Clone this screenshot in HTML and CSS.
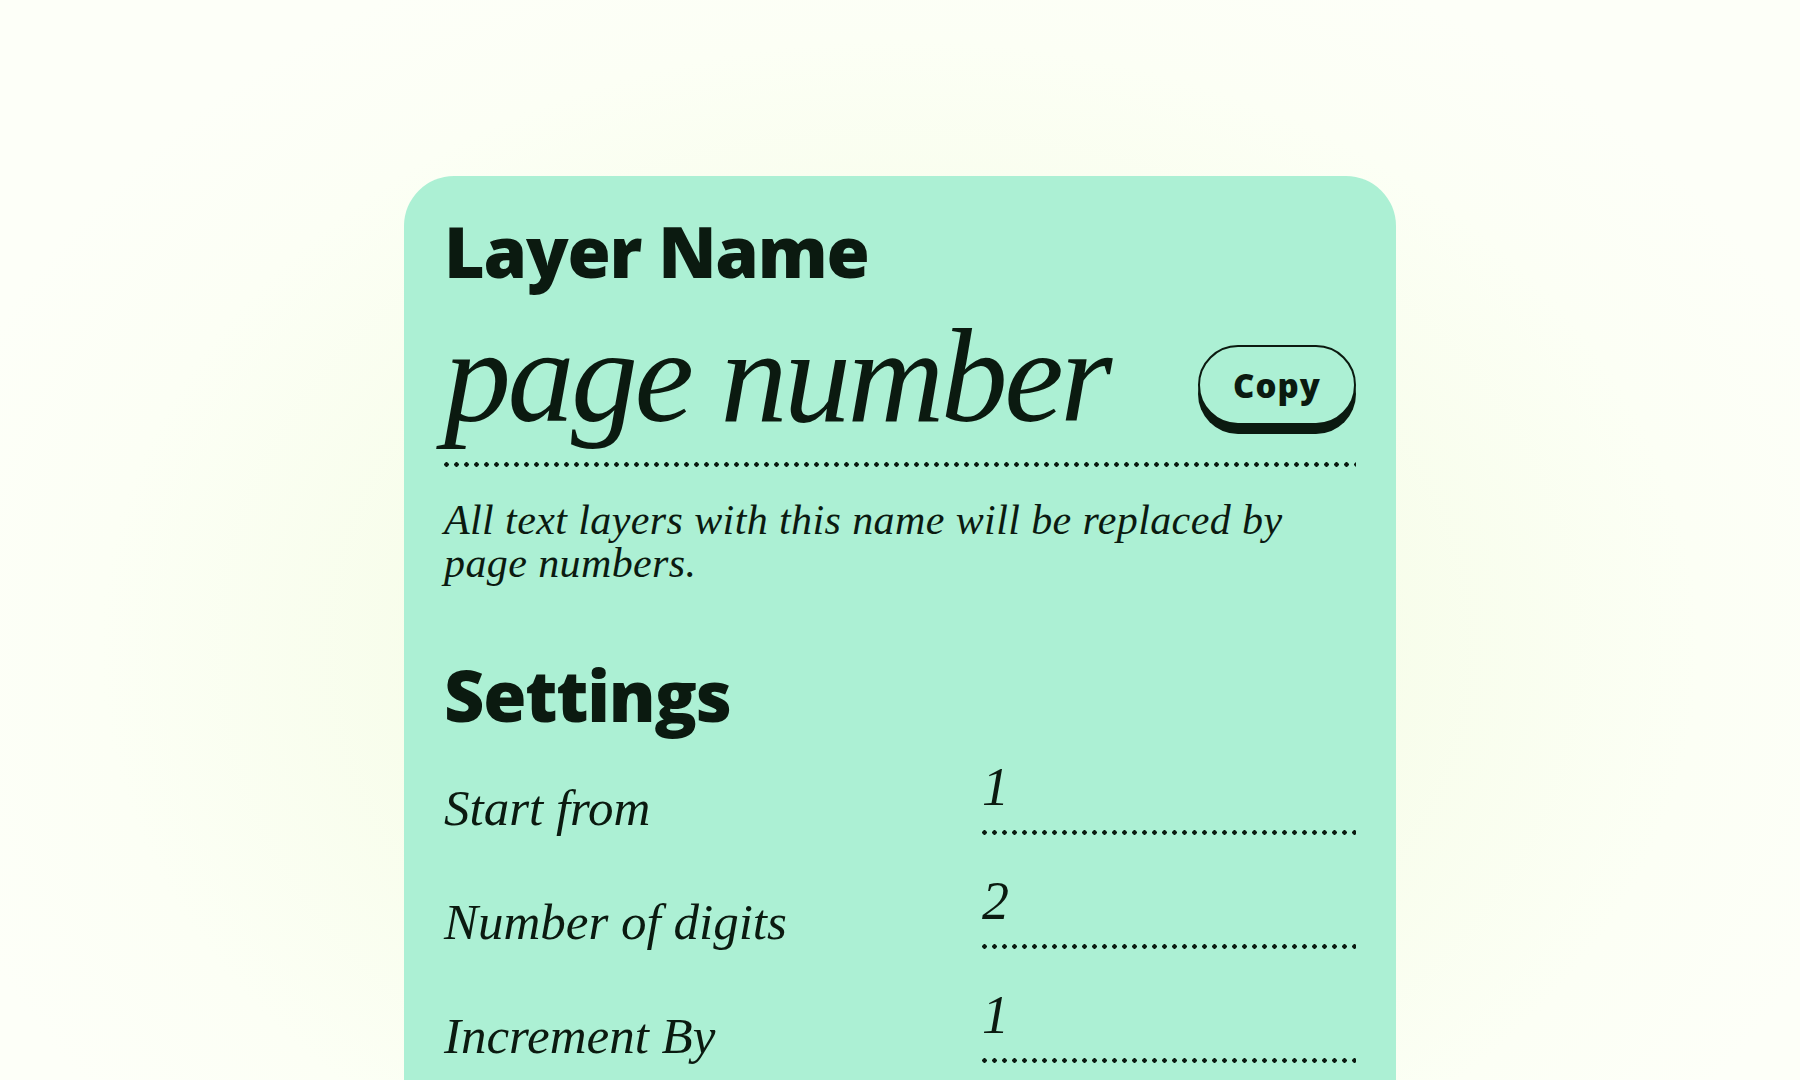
FILE: index.html
```html
<!DOCTYPE html>
<html lang="en">
<head>
<meta charset="utf-8">
<title>Layer Name</title>
<link rel="stylesheet" href="styles.css">
</head>
<body>
<main class="stage">
  <section class="card">
    <h2 class="heading">Layer Name</h2>
    <div class="name-row">
      <div class="name-text">page number</div>
      <button class="copy-btn" type="button">Copy</button>
    </div>
    <div class="dots"></div>
    <p class="desc">All text layers with this name will be replaced by<br>page numbers.</p>

    <h2 class="heading settings-title">Settings</h2>
    <div class="settings">
      <div class="row">
        <span class="label">Start from</span>
        <span class="value">1</span>
      </div>
      <div class="row">
        <span class="label">Number of digits</span>
        <span class="value">2</span>
      </div>
      <div class="row">
        <span class="label">Increment By</span>
        <span class="value">1</span>
      </div>
    </div>
  </section>
</main>
</body>
</html>
```

FILE: styles.css
```css
* { box-sizing: border-box; }

html, body {
  margin: 0;
  height: 1080px;
  overflow: hidden;
}

body {
  background: radial-gradient(ellipse 1000px 760px at 50% 60%, #f2fbdf 0%, #f7fdea 45%, #fcfff5 80%, #fdfff8 100%);
  color: #0b1a10;
}

.stage {
  padding-top: 176px;
}

.card {
  width: 992px;
  height: 904px;
  margin: 0 auto;
  overflow: hidden;
  background: #acf0d4;
  border-radius: 50px 50px 0 0;
  padding: 40px;
}

.heading {
  margin: 0;
  font-family: "Open Sans", "Inter", sans-serif;
  font-weight: 800;
  font-size: 70px;
  line-height: 71px;
  letter-spacing: -1.2px;
}

.name-row {
  display: flex;
  justify-content: space-between;
  align-items: flex-start;
  margin-top: 25px;
}

.name-text {
  font-family: "Liberation Serif", serif;
  font-style: italic;
  font-size: 134px;
  line-height: 128px;
  letter-spacing: -3.5px;
}

.copy-btn {
  margin-top: 33px;
  width: 158px;
  height: 80px;
  border: 2.5px solid #0b1a10;
  border-radius: 40px;
  background: #acf0d4;
  box-shadow: 0 9px 0 #0b1a10;
  color: #0b1a10;
  font-family: "Open Sans", "Inter", sans-serif;
  font-weight: 800;
  font-size: 33px;
  letter-spacing: 1px;
  padding: 0;
}

.dots {
  height: 5px;
  margin-top: 22px;
  background: radial-gradient(circle at 2.5px 2.5px, #0b1a10 2px, transparent 2.5px) 0 0 / 10px 5px repeat-x;
}

.desc {
  margin: 32px 0 0;
  font-family: "Liberation Serif", serif;
  font-style: italic;
  font-size: 42px;
  line-height: 43px;
  letter-spacing: 0.4px;
}

.settings-title {
  margin-top: 75px;
}

.settings {
  margin-top: 30px;
  display: flex;
  flex-direction: column;
  gap: 40px;
}

.row {
  display: grid;
  grid-template-columns: 1fr 374px;
  align-items: end;
  height: 74px;
}

.label {
  font-family: "Liberation Serif", serif;
  font-style: italic;
  font-size: 51px;
  line-height: 50px;
  margin-bottom: 2px;
}

.value {
  display: block;
  font-family: "Liberation Serif", serif;
  font-style: italic;
  font-size: 54px;
  line-height: 52px;
  padding-bottom: 17px;
  border-bottom: 5px solid transparent;
  background: radial-gradient(circle at 2.5px 2.5px, #0b1a10 2px, transparent 2.5px) 0 100% / 10px 5px repeat-x;
  background-origin: border-box;
  background-clip: border-box;
}
```
